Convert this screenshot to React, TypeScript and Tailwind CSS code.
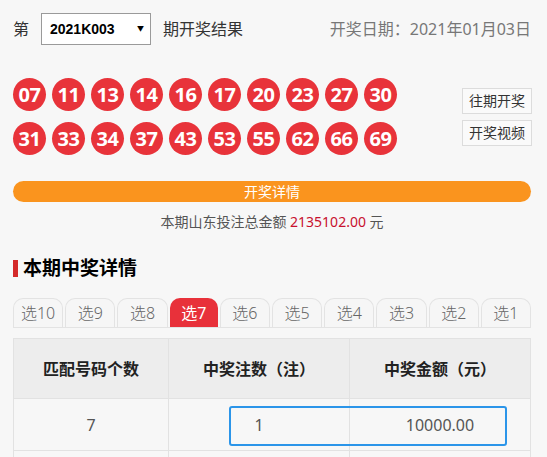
import React from 'react';

const ROW_ONE = ['07', '11', '13', '14', '16', '17', '20', '23', '27', '30'];
const ROW_TWO = ['31', '33', '34', '37', '43', '53', '55', '62', '66', '69'];
const TABS = ['选10', '选9', '选8', '选7', '选6', '选5', '选4', '选3', '选2', '选1'];

const FONT = { fontFamily: '"Noto Sans", "Noto Sans CJK SC", sans-serif' };

function Ball({ n }: { n: string }) {
  return (
    <div className="w-[33px] h-[33px] rounded-full bg-[#e8333a] text-white flex items-center justify-center text-[20px] font-bold leading-none tracking-[-0.5px]">
      {n}
    </div>
  );
}

export default function App() {
  return (
    <div className="min-h-screen bg-[#f7f7f7] text-[#333]" style={FONT}>
      <div className="w-[518px] ml-[13px] pt-[13px]">
        {/* issue selector + date */}
        <div className="flex items-center h-[32px]">
          <span className="text-[16px] text-[#333]">第</span>
          <div className="ml-[12px] w-[110px] h-[32px] border border-[#9a9a9a] bg-white flex items-center justify-between pl-[8px] pr-[6px]">
            <span className="text-[14px] font-bold text-black" style={{ fontFamily: '"Liberation Sans", sans-serif' }}>
              2021K003
            </span>
            <span className="text-[7px] text-black">▼</span>
          </div>
          <span className="ml-[12px] text-[16px] text-[#333]">期开奖结果</span>
          <span className="ml-auto text-[16px] text-[#777]">开奖日期：2021年01月03日</span>
        </div>

        {/* balls */}
        <div className="mt-[33px] flex items-center">
          <div className="flex flex-col gap-[11px]">
            <div className="flex gap-[6px]">
              {ROW_ONE.map((n) => (
                <Ball key={n} n={n} />
              ))}
            </div>
            <div className="flex gap-[6px]">
              {ROW_TWO.map((n) => (
                <Ball key={n} n={n} />
              ))}
            </div>
          </div>
          <div className="ml-auto flex flex-col gap-[6px] mr-[-1px]">
            <button className="w-[70px] h-[26px] border border-[#dcdcdc] bg-[#fafafa] text-[14px] text-[#333] leading-none">
              往期开奖
            </button>
            <button className="w-[70px] h-[26px] border border-[#dcdcdc] bg-[#fafafa] text-[14px] text-[#333] leading-none">
              开奖视频
            </button>
          </div>
        </div>

        {/* details bar */}
        <div className="mt-[26px] h-[21px] rounded-full bg-[#fa941e] text-white text-[14px] flex items-center justify-center leading-none">
          开奖详情
        </div>
        <div className="mt-[10px] text-center text-[14px] text-[#555] leading-[20px]">
          本期山东投注总金额 <span className="text-[#c8102e]">2135102.00</span> 元
        </div>

        {/* heading */}
        <div className="mt-[27px] flex items-center gap-[5px]">
          <div className="w-[5px] h-[17px] bg-[#d42a2a]" />
          <h2 className="text-[19px] font-bold text-black leading-none">本期中奖详情</h2>
        </div>

        {/* tabs */}
        <div className="mt-[20px] flex gap-[2px] border-b border-[#e3e3e3]">
          {TABS.map((t) =>
            t === '选7' ? (
              <div
                key={t}
                className="flex-1 h-[29px] rounded-t-[10px] bg-[#e8313a] text-white text-[16px] flex items-center justify-center"
              >
                {t}
              </div>
            ) : (
              <div
                key={t}
                className="flex-1 h-[29px] rounded-t-[10px] border border-b-0 border-[#e3e3e3] bg-[#f6f6f6] text-[#666] text-[16px] font-light flex items-center justify-center"
              >
                {t}
              </div>
            )
          )}
        </div>

        {/* table */}
        <div className="relative mt-[10px] border-l border-r border-t border-[#e2e2e2]">
          <div className="grid grid-cols-[155px_181px_1fr] h-[60px] bg-[#ededed] border-b border-[#e2e2e2] text-[16px] font-bold text-[#222]">
            <div className="flex items-center justify-center border-r border-[#e2e2e2]">匹配号码个数</div>
            <div className="flex items-center justify-center border-r border-[#e2e2e2]">中奖注数（注）</div>
            <div className="flex items-center justify-center">中奖金额（元）</div>
          </div>
          <div className="grid grid-cols-[155px_181px_1fr] h-[52px] border-b border-[#e2e2e2] text-[16px] text-[#555]">
            <div className="flex items-center justify-center border-r border-[#e2e2e2]">7</div>
            <div className="flex items-center justify-center border-r border-[#e2e2e2]">1</div>
            <div className="flex items-center justify-center">10000.00</div>
          </div>
          <div className="grid grid-cols-[155px_181px_1fr] h-[52px] border-b border-[#e2e2e2] text-[16px] text-[#555]">
            <div className="border-r border-[#e2e2e2]" />
            <div className="border-r border-[#e2e2e2]" />
            <div />
          </div>
          <div className="absolute left-[215px] top-[67px] w-[278px] h-[40px] border-2 border-[#2b95e9] rounded-[3px] pointer-events-none" />
        </div>
      </div>
    </div>
  );
}
